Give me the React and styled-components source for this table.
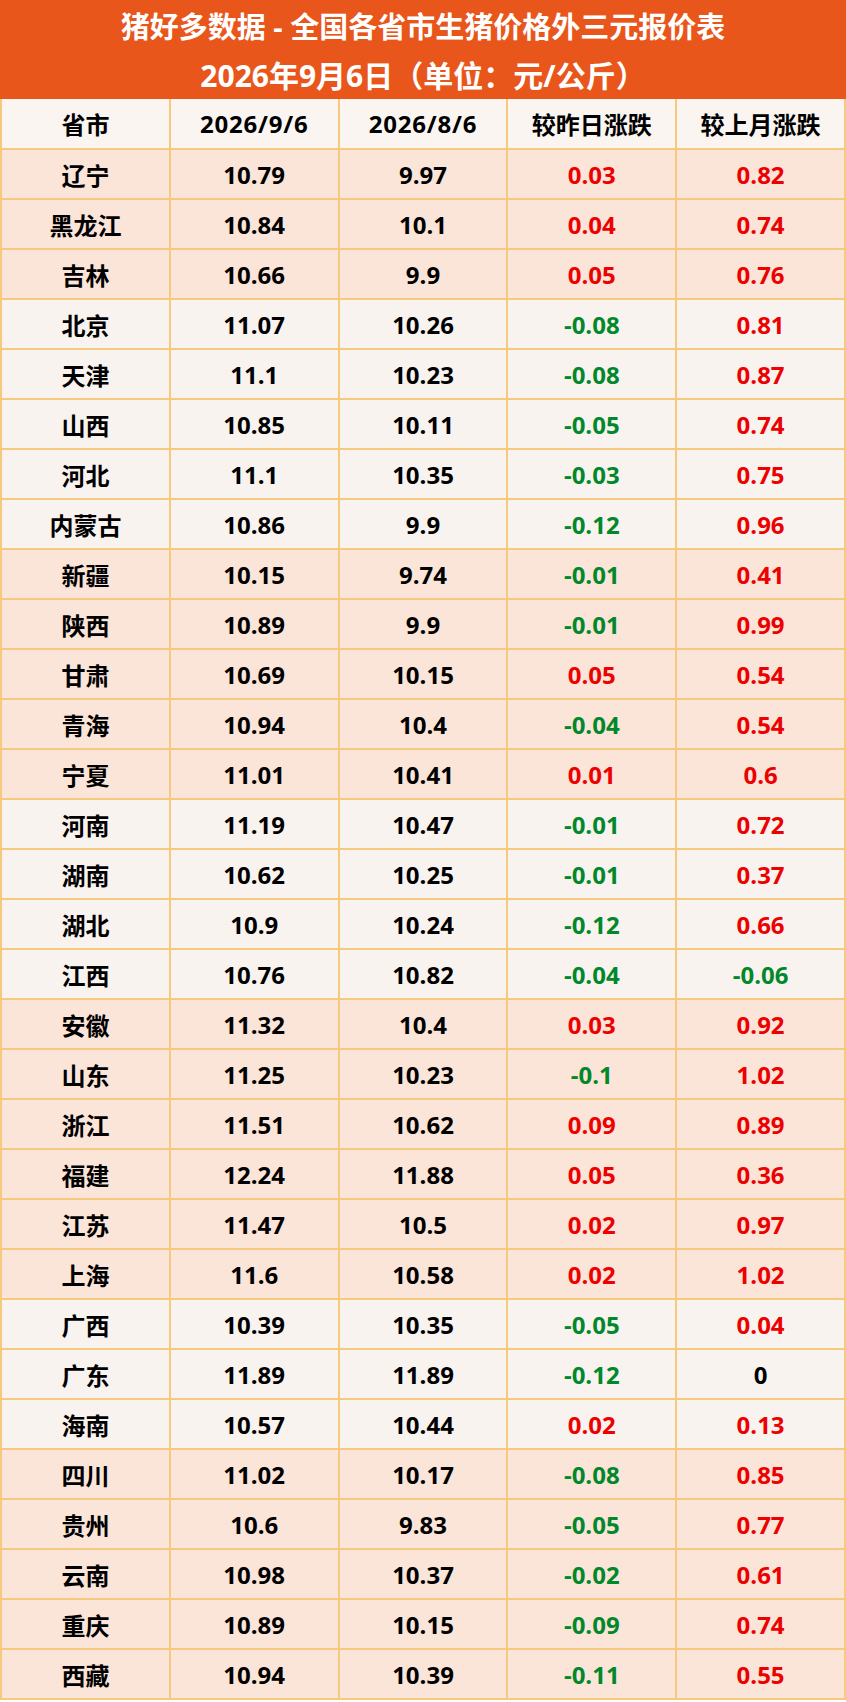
import styled, { createGlobalStyle } from 'styled-components';

const rows = [
    ['辽宁', '10.79', '9.97', '0.03', '0.82', 1],
    ['黑龙江', '10.84', '10.1', '0.04', '0.74', 1],
    ['吉林', '10.66', '9.9', '0.05', '0.76', 1],
    ['北京', '11.07', '10.26', '-0.08', '0.81', 0],
    ['天津', '11.1', '10.23', '-0.08', '0.87', 0],
    ['山西', '10.85', '10.11', '-0.05', '0.74', 0],
    ['河北', '11.1', '10.35', '-0.03', '0.75', 0],
    ['内蒙古', '10.86', '9.9', '-0.12', '0.96', 0],
    ['新疆', '10.15', '9.74', '-0.01', '0.41', 1],
    ['陕西', '10.89', '9.9', '-0.01', '0.99', 1],
    ['甘肃', '10.69', '10.15', '0.05', '0.54', 1],
    ['青海', '10.94', '10.4', '-0.04', '0.54', 1],
    ['宁夏', '11.01', '10.41', '0.01', '0.6', 1],
    ['河南', '11.19', '10.47', '-0.01', '0.72', 0],
    ['湖南', '10.62', '10.25', '-0.01', '0.37', 0],
    ['湖北', '10.9', '10.24', '-0.12', '0.66', 0],
    ['江西', '10.76', '10.82', '-0.04', '-0.06', 0],
    ['安徽', '11.32', '10.4', '0.03', '0.92', 1],
    ['山东', '11.25', '10.23', '-0.1', '1.02', 1],
    ['浙江', '11.51', '10.62', '0.09', '0.89', 1],
    ['福建', '12.24', '11.88', '0.05', '0.36', 1],
    ['江苏', '11.47', '10.5', '0.02', '0.97', 1],
    ['上海', '11.6', '10.58', '0.02', '1.02', 1],
    ['广西', '10.39', '10.35', '-0.05', '0.04', 0],
    ['广东', '11.89', '11.89', '-0.12', '0', 0],
    ['海南', '10.57', '10.44', '0.02', '0.13', 0],
    ['四川', '11.02', '10.17', '-0.08', '0.85', 1],
    ['贵州', '10.6', '9.83', '-0.05', '0.77', 1],
    ['云南', '10.98', '10.37', '-0.02', '0.61', 1],
    ['重庆', '10.89', '10.15', '-0.09', '0.74', 1],
    ['西藏', '10.94', '10.39', '-0.11', '0.55', 1],
];

const tone = (v) => {
    const n = parseFloat(v);
    if (n > 0) return 'up';
    if (n < 0) return 'down';
    return 'flat';
};

export default function App() {
    return (
        <>
            <GlobalStyle />
            <Sheet>
                <TitleBar>
                    <TitleLine $size={29}>猪好多数据 - 全国各省市生猪价格外三元报价表</TitleLine>
                    <TitleLine $size={30}>2026年9月6日（单位：元/公斤）</TitleLine>
                </TitleBar>
                <PriceTable>
                    <colgroup>
                        <col /><col /><col /><col /><col />
                    </colgroup>
                    <thead>
                        <HeadRow>
                            <HeadCell>省市</HeadCell>
                            <HeadCell $date>2026/9/6</HeadCell>
                            <HeadCell $date>2026/8/6</HeadCell>
                            <HeadCell>较昨日涨跌</HeadCell>
                            <HeadCell>较上月涨跌</HeadCell>
                        </HeadRow>
                    </thead>
                    <tbody>
                        {rows.map(([name, cur, prev, day, month, pink]) => (
                            <DataRow key={name} $pink={!!pink}>
                                <Cell>{name}</Cell>
                                <Cell>{cur}</Cell>
                                <Cell>{prev}</Cell>
                                <Cell $tone={tone(day)}>{day}</Cell>
                                <Cell $tone={tone(month)}>{month}</Cell>
                            </DataRow>
                        ))}
                    </tbody>
                </PriceTable>
            </Sheet>
        </>
    );
}

const GlobalStyle = createGlobalStyle`
    body {
        margin: 0;
        background: #ffffff;
        font-family: "Open Sans", "Noto Sans CJK SC", sans-serif;
    }
`;

const Sheet = styled.div`
    width: 846px;
    display: flex;
    flex-direction: column;
`;

const TitleBar = styled.div`
    background: #e8561b;
    height: 99px;
    display: flex;
    flex-direction: column;
    justify-content: center;
`;

const TitleLine = styled.div`
    height: 49px;
    display: flex;
    align-items: center;
    justify-content: center;
    color: #ffffff;
    font-size: ${(p) => p.$size}px;
    font-weight: 700;
`;

const PriceTable = styled.table`
    width: 846px;
    table-layout: fixed;
    border-collapse: collapse;

    col {
        width: 20%;
    }
`;

const HeadRow = styled.tr`
    height: 50px;
    background: #faf5f1;
`;

const HeadCell = styled.th`
    border: 2px solid #f7c97f;
    border-top: none;
    text-align: center;
    vertical-align: middle;
    padding: 0;
    font-size: 24px;
    font-weight: 700;
    color: #000000;
    letter-spacing: ${(p) => (p.$date ? '0.8px' : '0')};
`;

const DataRow = styled.tr`
    height: 50px;
    background: ${(p) => (p.$pink ? '#fbe4d8' : '#f9f3f0')};
`;

const colors = {
    up: '#ec0000',
    down: '#00882a',
    flat: '#000000',
};

const Cell = styled.td`
    border: 2px solid #f7c97f;
    text-align: center;
    vertical-align: middle;
    padding: 0;
    font-size: 24px;
    font-weight: 700;
    color: ${(p) => colors[p.$tone] || '#000000'};
`;
